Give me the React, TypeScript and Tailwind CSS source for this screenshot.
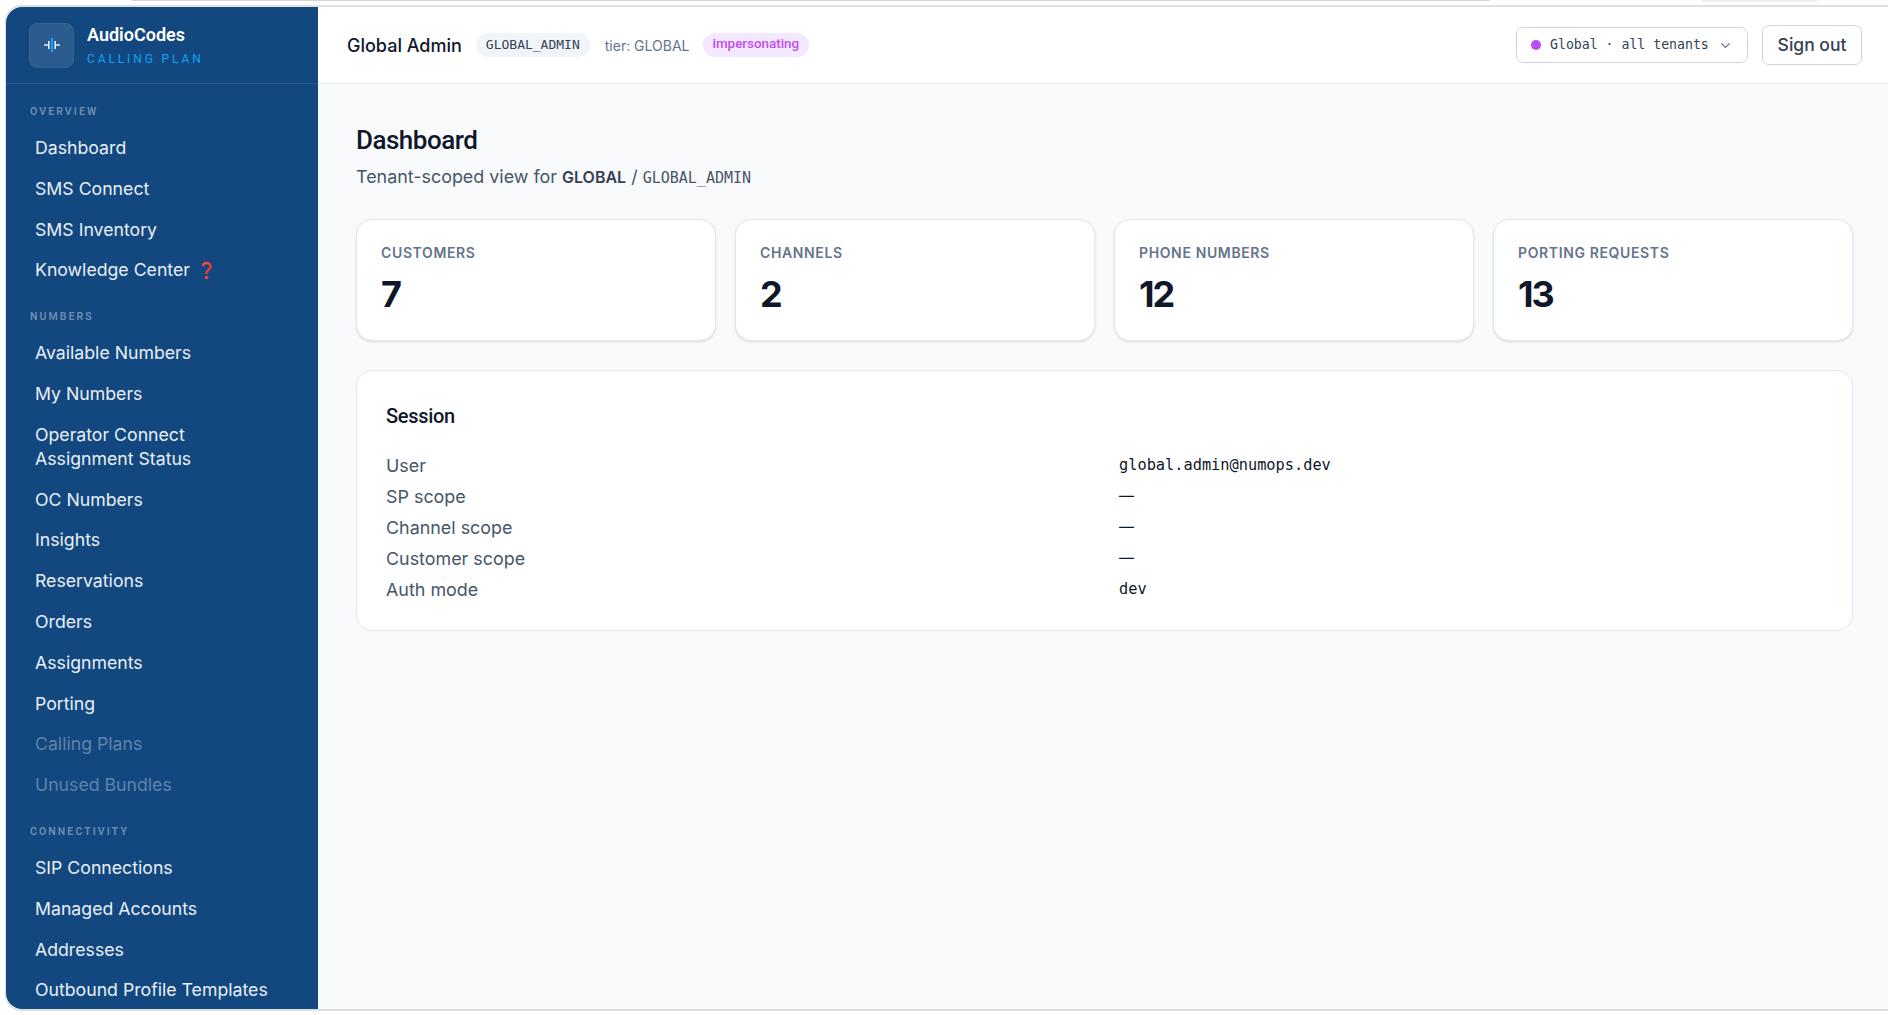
import { ChevronDown } from 'lucide-react'

const sans = "font-['Inter','Noto_Sans',sans-serif]"
const head = "font-['Roboto','Liberation_Sans',sans-serif]"
const mono = "font-['DejaVu_Sans_Mono','Liberation_Mono',monospace]"

type NavItem = { label: string; dim?: boolean; help?: boolean; wrap?: boolean }
type NavSection = { title: string; items: NavItem[] }

const sections: NavSection[] = [
  {
    title: 'OVERVIEW',
    items: [
      { label: 'Dashboard' },
      { label: 'SMS Connect' },
      { label: 'SMS Inventory' },
      { label: 'Knowledge Center', help: true },
    ],
  },
  {
    title: 'NUMBERS',
    items: [
      { label: 'Available Numbers' },
      { label: 'My Numbers' },
      { label: 'Operator Connect Assignment Status', wrap: true },
      { label: 'OC Numbers' },
      { label: 'Insights' },
      { label: 'Reservations' },
      { label: 'Orders' },
      { label: 'Assignments' },
      { label: 'Porting' },
      { label: 'Calling Plans', dim: true },
      { label: 'Unused Bundles', dim: true },
    ],
  },
  {
    title: 'CONNECTIVITY',
    items: [
      { label: 'SIP Connections' },
      { label: 'Managed Accounts' },
      { label: 'Addresses' },
      { label: 'Outbound Profile Templates' },
    ],
  },
]

const stats = [
  { label: 'CUSTOMERS', value: '7' },
  { label: 'CHANNELS', value: '2' },
  { label: 'PHONE NUMBERS', value: '12' },
  { label: 'PORTING REQUESTS', value: '13' },
]

const session = [
  { key: 'User', value: 'global.admin@numops.dev' },
  { key: 'SP scope', value: '—' },
  { key: 'Channel scope', value: '—' },
  { key: 'Customer scope', value: '—' },
  { key: 'Auth mode', value: 'dev' },
]

const Sidebar = () => (
  <aside className="w-[312px] h-full shrink-0 bg-[#13477f] rounded-l-[16px] flex flex-col overflow-hidden">
    <div className="h-[77px] shrink-0 border-b border-[#2a5a8e] flex items-center pl-[23px] gap-[13px]">
      <div className="w-[45px] h-[45px] rounded-[8px] bg-[#2b5b8f] border border-[#34639a] flex items-center justify-center">
        <svg width="18" height="16" viewBox="0 0 18 16" fill="none">
          <path d="M1 8h4M13 8h4" stroke="#e6eef6" strokeWidth="1.6" />
          <path d="M5.8 4v8M12.2 4v8" stroke="#e6eef6" strokeWidth="1.6" />
          <path d="M9 1v14" stroke="#19a5f5" strokeWidth="2" />
        </svg>
      </div>
      <div className="flex flex-col">
        <span className={`${head} text-[18px] leading-[22px] mt-[1px] font-semibold text-white`}>AudioCodes</span>
        <span className={`${head} text-[12px] leading-[16px] mt-[5px] tracking-[0.24em] text-[#0ea5f5]`}>CALLING PLAN</span>
      </div>
    </div>
    <nav className="flex flex-col px-[24px] pt-[20px]">
      {sections.map((s) => (
        <div key={s.title} className="flex flex-col mb-[18px]">
          <div className={`${head} text-[10.5px] leading-[16px] font-semibold tracking-[0.2em] text-[#6f8fb0] mb-[8px]`}>{s.title}</div>
          {s.items.map((item) => (
            <div
              key={item.label}
              className={`${sans} pl-[5px] py-[8px] mb-[0.8px] text-[17.7px] leading-[24px] ${item.wrap ? 'pr-[30px]' : 'whitespace-nowrap'} ${item.dim ? 'text-[#5f83a9]' : 'text-[#e9f0f7]'}`}
            >
              {item.label}
              {item.help && <span className="ml-[7px] text-[16px] text-[#e0245e]">❓</span>}
            </div>
          ))}
        </div>
      ))}
    </nav>
  </aside>
)

const Header = () => (
  <header className="h-[77px] shrink-0 bg-white border-b border-[#e2e8f0] flex items-center pl-[29px] pr-[26px]">
    <span className={`${sans} text-[18px] font-medium text-[#0f172a]`}>Global Admin</span>
    <span className={`${mono} ml-[14px] h-[24px] px-[10px] rounded-full bg-[#f1f5f9] text-[13px] leading-[24px] text-[#334155]`}>GLOBAL_ADMIN</span>
    <span className={`${sans} ml-[15px] text-[14px] text-[#64748b]`}>tier: GLOBAL</span>
    <span className={`${head} ml-[13px] h-[24px] px-[10px] rounded-full bg-[#f3e8ff] text-[13.4px] font-medium leading-[21px] text-[#c04df5]`}>impersonating</span>
    <div className="ml-auto flex items-center gap-[14px]">
      <div className="h-[36px] w-[232px] px-[14px] rounded-[7px] border border-[#cbd5e1] flex items-center">
        <span className="w-[10px] h-[10px] rounded-full bg-[#b94ff0]" />
        <span className={`${mono} ml-[9px] text-[13.2px] text-[#334155]`}>Global · all tenants</span>
        <ChevronDown size={15} className="ml-auto text-[#64748b]" />
      </div>
      <div className={`${sans} h-[40px] w-[100px] pt-[1px] rounded-[7px] border border-[#cbd5e1] flex items-center justify-center text-[17.5px] font-medium text-[#334155]`}>
        Sign out
      </div>
    </div>
  </header>
)

const Dashboard = () => (
  <main className="flex-1 bg-[#f8fafc] pl-[38px] pr-[35px] pt-[38px]">
    <h1 className={`${head} text-[26px] leading-[36px] tracking-[-0.5px] font-medium text-[#0f172a]`}>Dashboard</h1>
    <p className={`${sans} mt-[6px] text-[17.9px] leading-[26px] text-[#475569]`}>
      Tenant-scoped view for <strong className="text-[16px] font-semibold text-[#334155]">GLOBAL</strong> /{' '}
      <span className={`${mono} text-[15px]`}>GLOBAL_ADMIN</span>
    </p>
    <div className="grid grid-cols-4 gap-[19px] mt-[28px]">
      {stats.map((s) => (
        <div key={s.label} className="h-[122px] bg-white border border-[#e2e8f0] rounded-[16px] px-[24px] pt-[23px] shadow-sm">
          <div className={`${sans} text-[14px] leading-[20px] font-semibold tracking-[0.045em] text-[#64748b]`}>{s.label}</div>
          <div className={`${sans} mt-[9px] text-[36px] leading-[44px] tracking-[-2px] font-bold text-[#0f172a]`}>{s.value}</div>
        </div>
      ))}
    </div>
    <section className="mt-[29px] h-[261px] bg-white border border-[#e2e8f0] rounded-[16px] px-[29px] pt-[31px]">
      <h2 className={`${head} text-[20px] leading-[28px] tracking-[-0.3px] font-medium text-[#0f172a]`}>Session</h2>
      <div className="grid grid-cols-[733px_1fr] mt-[20px]">
        {session.map((row) => (
          <div key={row.key} className="contents">
            <div className={`${sans} h-[31px] text-[17.9px] leading-[31px] text-[#475569]`}>{row.key}</div>
            {row.value === '—' ? (
              <div className={`${sans} h-[31px] text-[15px] leading-[29px] text-[#0f172a]`}>{row.value}</div>
            ) : (
              <div className={`${mono} h-[31px] text-[15.3px] leading-[31px] text-[#0f172a]`}>{row.value}</div>
            )}
          </div>
        ))}
      </div>
    </section>
  </main>
)

export default function App() {
  return (
    <div className="w-[1888px] h-[1015px] bg-white overflow-hidden flex flex-col">
      {/* window chrome slivers along the top edge */}
      <div className="h-[5px] shrink-0 flex items-start">
        <div className="ml-[132px] w-[1358px] h-[1px] bg-[#d4d4d4]" />
        <div className="ml-[211px] w-[117px] h-[2px] rounded-b-[4px] bg-[#efefef]" />
      </div>
      <div className="h-[1006px] ml-[5px] flex rounded-l-[16px] border-l border-t-2 border-b-2 border-[#dedfe2]">
        <Sidebar />
        <div className="flex-1 flex flex-col min-w-0">
          <Header />
          <Dashboard />
        </div>
      </div>
    </div>
  )
}
